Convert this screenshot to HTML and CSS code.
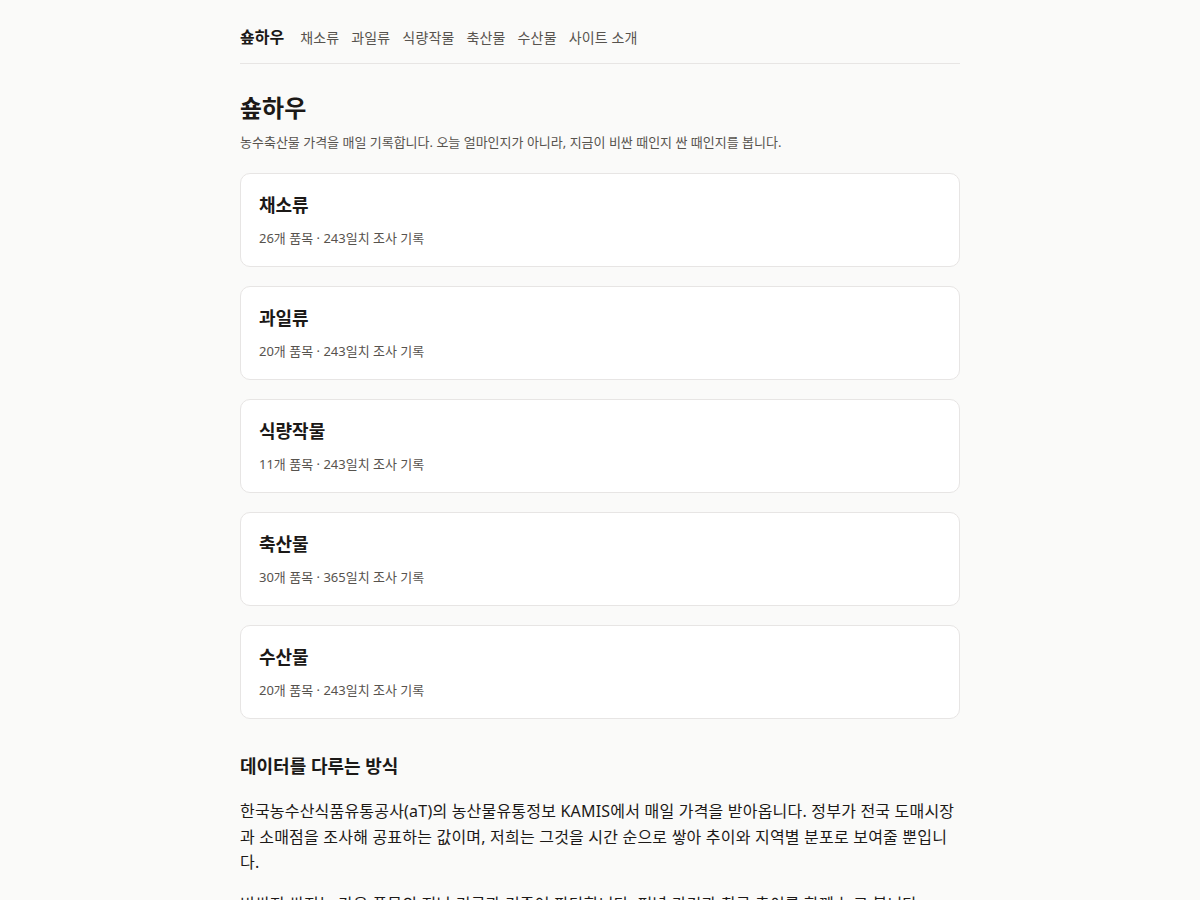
FILE: index.html
```html
<!DOCTYPE html>
<html lang="ko">
<head>
<meta charset="utf-8">
<title>숖하우</title>
<link rel="stylesheet" href="styles.css">
</head>
<body>
<div class="page">
  <nav class="nav">
    <a class="brand" href="#">숖하우</a>
    <a class="nav-link" href="#">채소류</a>
    <a class="nav-link" href="#">과일류</a>
    <a class="nav-link" href="#">식량작물</a>
    <a class="nav-link" href="#">축산물</a>
    <a class="nav-link" href="#">수산물</a>
    <a class="nav-link" href="#">사이트 소개</a>
  </nav>
  <header class="intro">
    <h1 class="title">숖하우</h1>
    <p class="lead">농수축산물 가격을 매일 기록합니다. 오늘 얼마인지가 아니라, 지금이 비싼 때인지 싼 때인지를 봅니다.</p>
  </header>
  <section class="cards">
    <a class="card" href="#"><h2 class="card-title">채소류</h2><p class="card-meta">26개 품목 · 243일치 조사 기록</p></a>
    <a class="card" href="#"><h2 class="card-title">과일류</h2><p class="card-meta">20개 품목 · 243일치 조사 기록</p></a>
    <a class="card" href="#"><h2 class="card-title">식량작물</h2><p class="card-meta">11개 품목 · 243일치 조사 기록</p></a>
    <a class="card" href="#"><h2 class="card-title">축산물</h2><p class="card-meta">30개 품목 · 365일치 조사 기록</p></a>
    <a class="card" href="#"><h2 class="card-title">수산물</h2><p class="card-meta">20개 품목 · 243일치 조사 기록</p></a>
  </section>
  <section class="about">
    <h2 class="about-title">데이터를 다루는 방식</h2>
    <p class="about-text">한국농수산식품유통공사(aT)의 농산물유통정보 KAMIS에서 매일 가격을 받아옵니다. 정부가 전국 도매시장과 소매점을 조사해 공표하는 값이며, 저희는 그것을 시간 순으로 쌓아 추이와 지역별 분포로 보여줄 뿐입니다.</p>
    <p class="about-text">비싼지 싼지는 같은 품목의 지난 기록과 견주어 판단합니다. 평년 가격과 최근 추이를 함께 놓고 봅니다.</p>
  </section>
</div>
</body>
</html>
```
FILE: styles.css
```css
* { box-sizing: border-box; }
html, body { margin: 0; padding: 0; }
body {
  background: #fafaf9;
  color: #1c1917;
  font-family: "Noto Sans", "Noto Sans CJK KR", sans-serif;
}
a { text-decoration: none; color: inherit; }
.page {
  width: 720px;
  margin: 0 auto;
}
.nav {
  display: flex;
  align-items: baseline;
  gap: 12px;
  padding: 24px 0 15px;
  border-bottom: 1px solid #e7e5e4;
}
.brand {
  font-size: 16px;
  font-weight: 700;
  color: #1c1917;
  margin-right: 4px;
}
.nav-link {
  font-size: 14px;
  letter-spacing: 0.15px;
  color: #57534e;
}
.intro { padding-top: 26px; }
.title {
  margin: 0;
  font-size: 24px;
  font-weight: 700;
  line-height: 36px;
}
.lead {
  margin: 6px 0 0;
  font-size: 13px;
  line-height: 20px;
  color: #57534e;
}
.cards {
  display: flex;
  flex-direction: column;
  gap: 19px;
  margin-top: 21px;
}
.card {
  display: block;
  background: #fff;
  border: 1px solid #e7e5e4;
  border-radius: 10px;
  padding: 17px 18px 18px;
}
.card-title {
  margin: 0;
  font-size: 18px;
  font-weight: 700;
  line-height: 28px;
}
.card-meta {
  margin: 9px 0 0;
  font-size: 13px;
  line-height: 20px;
  color: #57534e;
}
.about { margin-top: 33px; }
.about-title {
  margin: 0;
  font-size: 18px;
  font-weight: 700;
  line-height: 28px;
}
.about-text {
  margin: 19px 0 0;
  font-size: 16px;
  line-height: 25.5px;
  letter-spacing: 0.2px;
  color: #1c1917;
}
.about-text + .about-text { margin-top: 16px; }
```
